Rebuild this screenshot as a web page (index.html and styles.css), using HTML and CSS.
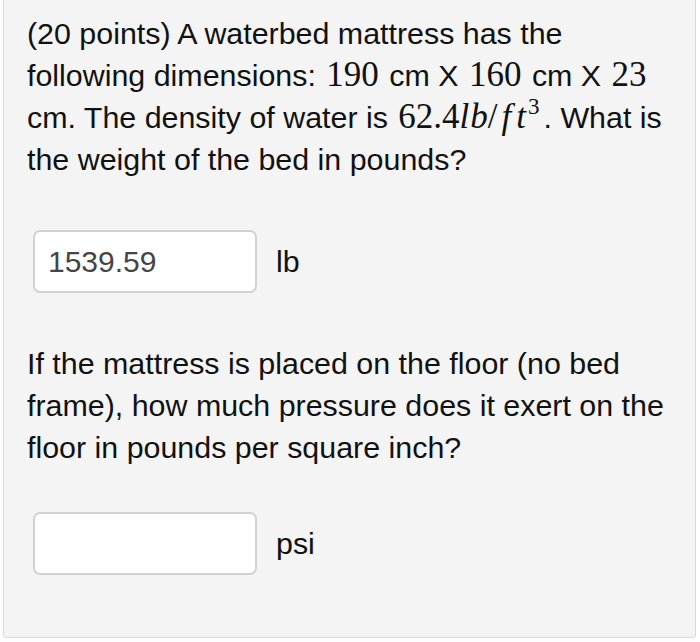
FILE: index.html
```html
<!DOCTYPE html>
<html>
<head>
<meta charset="utf-8">
<link rel="stylesheet" href="styles.css">
</head>
<body>
<div class="panel">
  <p class="q">(20 points) A waterbed mattress has the following dimensions: <span class="m">190</span> cm X <span class="m">160</span> cm X <span class="m">23</span> cm. The density of water is <span class="m">62.4<i>l</i><i>b</i>/<i class="f">f</i><i>t</i><sup>3</sup></span>. What is the weight of the bed in pounds?</p>
  <div class="answer first">
    <div class="field">1539.59</div>
    <span class="unit">lb</span>
  </div>
  <p class="q q2">If the mattress is placed on the floor (no bed frame), how much pressure does it exert on the floor in pounds per square inch?</p>
  <div class="answer second">
    <div class="field"></div>
    <span class="unit">psi</span>
  </div>
</div>
</body>
</html>
```
FILE: styles.css
```css
html, body {
  margin: 0;
  padding: 0;
  background: #ffffff;
}
body {
  font-family: "Liberation Sans", Arial, Helvetica, sans-serif;
  color: #111;
}
.panel {
  margin: 0 4px 0 3px;
  height: 638px;
  box-sizing: border-box;
  background: #f4f4f4;
  border: 1px solid #d9d9d9;
  border-top: none;
  border-radius: 0 0 4px 4px;
  padding: 12px 20px 0 23px;
}
.q {
  margin: 0;
  font-size: 30.4px;
  line-height: 42px;
}
.q2 {
  margin-top: 49px;
}
.m {
  font-family: "Liberation Serif", "Times New Roman", serif;
  font-size: 35px;
  line-height: 0;
  margin: 0 2px;
}
.m i {
  font-style: italic;
}
.m i + i {
  margin-left: 1px;
}
.m .f {
  margin-left: 4px;
  margin-right: 4px;
}
.m sup {
  font-size: 23px;
  line-height: 0;
  vertical-align: 14px;
  margin-left: 2px;
  margin-right: 2px;
}
.answer {
  display: flex;
  align-items: center;
  gap: 19px;
  margin-left: 6px;
}
.first {
  margin-top: 50px;
}
.second {
  margin-top: 44px;
}
.field {
  width: 224px;
  height: 63px;
  box-sizing: border-box;
  background: #fff;
  border: 2px solid #d2d2d2;
  border-radius: 7px;
  padding: 0 13px;
  font-size: 30px;
  line-height: 59px;
  color: #454545;
}
.unit {
  font-size: 30.4px;
  color: #111;
}
```
